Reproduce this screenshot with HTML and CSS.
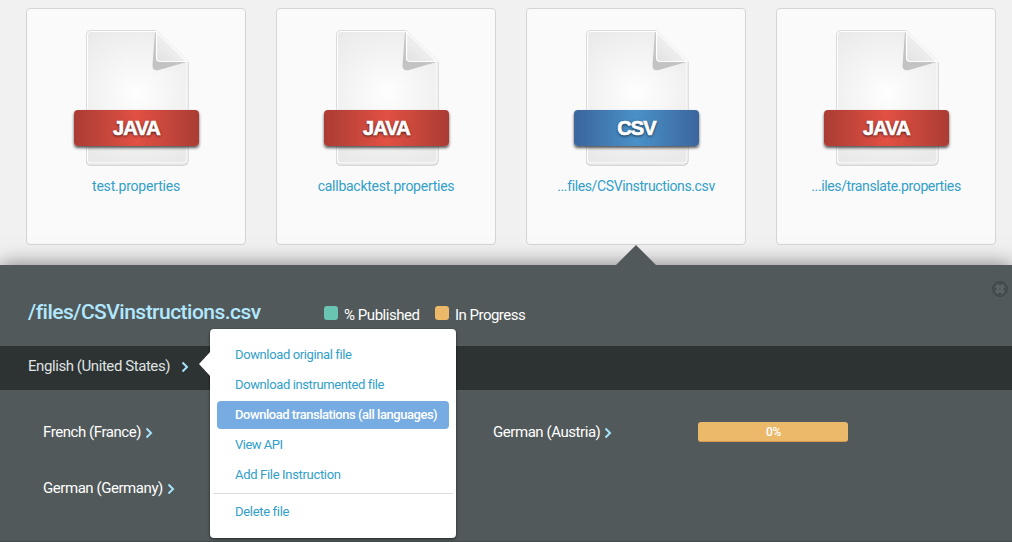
FILE: index.html
```html
<!DOCTYPE html>
<html lang="en">
<head>
<meta charset="utf-8">
<title>Files</title>
<link rel="stylesheet" href="styles.css">
</head>
<body>
<svg class="defs" width="0" height="0" aria-hidden="true">
  <defs>
    <radialGradient id="paper" gradientUnits="userSpaceOnUse" cx="64" cy="64" r="78">
      <stop offset="0" stop-color="#fefefe"/><stop offset="1" stop-color="#e9e9e9"/>
    </radialGradient>
    <linearGradient id="fold" x1="0" y1="1" x2=".6" y2=".3">
      <stop offset="0" stop-color="#e2e2e2"/><stop offset="1" stop-color="#f3f3f3"/>
    </linearGradient>
    <symbol id="page" viewBox="0 0 128 140">
      <path d="M17 1.500H83.500L115 32.500V131.500a4 4 0 0 1-4 4H17a3.500 3.500 0 0 1-3.500-4V5.500a4 4 0 0 1 3.500-4z" fill="none" stroke="#999" stroke-opacity=".45" stroke-width="1" transform="translate(0 .8)"/>
      <path d="M17 1.500H83.500L115 32.500V131a4 4 0 0 1-4 4H17a3.500 3.500 0 0 1-3.500-4V5.500a4 4 0 0 1 3.500-4z" fill="#fff" stroke="#dadada" stroke-width="1"/>
      <path d="M18 3H83L113.500 33V130.500a3 3 0 0 1-3 3H18a3 3 0 0 1-3-3V6a3 3 0 0 1 3-3z" fill="url(#paper)"/>
      <path d="M82 3L79.500 36.500Q79.500 42.500 86 41L113.500 33z" fill="#c3c3c3"/>
      <path d="M83.500 2.500L114 32.500H87.500Q83.500 32.500 83.500 28.500z" fill="url(#fold)" stroke="#fff" stroke-width="1.200"/>
    </symbol>
    <symbol id="chevron" viewBox="0 0 8 12">
      <path d="M1.500 1.500L6 6L1.500 10.500" fill="none" stroke="#a5e3fb" stroke-width="2"/>
    </symbol>
  </defs>
</svg>
<main class="files">
  <a class="card"><div class="icon"><svg class="sheet"><use href="#page"/></svg><span class="ribbon">JAVA</span></div><span class="name n1">test.properties</span></a>
  <a class="card"><div class="icon"><svg class="sheet"><use href="#page"/></svg><span class="ribbon">JAVA</span></div><span class="name n2">callbacktest.properties</span></a>
  <a class="card"><div class="icon"><svg class="sheet"><use href="#page"/></svg><span class="ribbon csv">CSV</span></div><span class="name n3">...files/CSVinstructions.csv</span></a>
  <a class="card"><div class="icon"><svg class="sheet"><use href="#page"/></svg><span class="ribbon">JAVA</span></div><span class="name n4">...iles/translate.properties</span></a>
</main>
<section class="panel">
  <svg class="pointer" viewBox="0 0 40 20"><path d="M0 20L20 0L40 20z" fill="#51595a"/></svg>
  <svg class="close" viewBox="0 0 18 18"><circle cx="9" cy="9" r="7.500" fill="#464e4f" stroke="#404849"/><path d="M5.500 5.500L12.500 12.500M12.500 5.500L5.500 12.500" stroke="#667071" stroke-width="3.200"/><path d="M6 6L12 12M12 6L6 12" stroke="#50595a" stroke-width="1.400"/></svg>
  <header class="head">
    <h1 class="title">/files/CSVinstructions.csv</h1>
    <div class="legend"><i class="swatch green"></i><span class="l1">% Published</span><i class="swatch orange"></i><span class="l2">In Progress</span></div>
  </header>
  <div class="source"><span class="lang">English (United States)</span><svg class="chev"><use href="#chevron"/></svg>
    <nav class="menu">
      <svg class="arrow" viewBox="0 0 13 26"><path d="M13 0L1 13L13 26z" fill="#fff"/></svg>
      <a class="item m1">Download original file</a>
      <a class="item m2">Download instrumented file</a>
      <a class="item active">Download translations (all languages)</a>
      <a class="item m4">View API</a>
      <a class="item m5">Add File Instruction</a>
      <hr class="rule">
      <a class="item m6">Delete file</a>
    </nav>
  </div>
  <div class="targets">
    <div class="target"><span class="t1">French (France)</span><svg class="chev"><use href="#chevron"/></svg></div>
    <div class="target"><span class="t2">German (Austria)</span><svg class="chev"><use href="#chevron"/></svg><span class="bar">0%</span></div>
    <div class="target"><span class="t3">German (Germany)</span><svg class="chev"><use href="#chevron"/></svg></div>
  </div>
</section>
</body>
</html>
```
FILE: styles.css
```css
* { box-sizing: border-box; }
body { margin: 0; height: 542px; overflow: hidden; background: #f1f1f1; font-family: Roboto, "Liberation Sans", sans-serif; display: flex; flex-direction: column; }
.defs { position: absolute; }
.files { display: flex; gap: 30px; padding: 8px 0 0 26px; height: 265px; flex: none; }
.card { width: 220px; height: 237px; flex: none; border: 1px solid #d5d5d5; border-radius: 4px; background: #fafafa; display: flex; flex-direction: column; align-items: center; padding-top: 20px; }
.icon { position: relative; width: 128px; height: 140px; margin-left: 2px; display: grid; flex: none; }
.sheet { width: 128px; height: 140px; grid-area: 1 / 1; }
.ribbon { grid-area: 1 / 1; z-index: 1; width: 125px; height: 36px; margin: 81px 0 0 1px; border-radius: 4px; background: linear-gradient(90deg, #aa3c34, #e25043 50%, #aa3c34); box-shadow: 0 2px 3px rgba(0,0,0,.65); color: #fff; font-family: "Liberation Sans", sans-serif; font-size: 20px; line-height: 36px; font-weight: 700; letter-spacing: -.9px; text-align: center; text-shadow: 0 1px 3px rgba(0,0,0,.8); -webkit-text-stroke: .7px #fff; }
.ribbon.csv { background: linear-gradient(90deg, #3b659d, #4991c8 50%, #3b659d); }
.name { font-size: 14px; line-height: 20px; margin-top: 7px; color: #32a0c9; white-space: nowrap; }
.n1 { letter-spacing: -.2px; }
.n2 { letter-spacing: -.26px; }
.n3 { letter-spacing: -.38px; }
.n4 { letter-spacing: -.38px; }
.panel { position: relative; z-index: 2; flex: 1; background: #51595a; box-shadow: 0 0 20px rgba(0,0,0,.5); border-bottom: 1px solid #454c4d; }
.pointer { position: absolute; left: 616px; top: -20px; width: 40px; height: 20px; }
.close { position: absolute; left: 991px; top: 15px; width: 18px; height: 18px; }
.head { height: 81px; padding: 0 0 0 28px; display: flex; align-items: center; }
.title { margin: 12px 0 0; width: 296px; font-size: 21px; line-height: 28px; font-weight: 500; letter-spacing: -.52px; color: #b1e8ff; white-space: nowrap; }
.legend { display: flex; align-items: center; margin-top: 18px; color: #fff; font-size: 15px; line-height: 20px; letter-spacing: -.45px; white-space: nowrap; }
.l2 { letter-spacing: -.52px; }
.swatch { width: 14px; height: 14px; border-radius: 3px; margin: -4px 6px 0 0; }
.green { background: #69c5b2; }
.orange { background: #ecb96b; }
.l1 { width: 91px; }
.source { position: relative; height: 44px; background: #2d3232; display: flex; align-items: center; padding-left: 28px; color: #dfe2e2; font-size: 15px; line-height: 20px; }
.lang { margin-top: -4px; width: 153px; letter-spacing: -.43px; white-space: nowrap; }
.chev { width: 8px; height: 12px; flex: none; }
.source .chev { margin-top: -2px; }
.menu { position: absolute; z-index: 3; left: 210px; top: -17px; width: 246px; height: 209px; padding: 12px 7px 0; background: #fff; border-radius: 4px; box-shadow: 0 1px 3px rgba(0,0,0,.6); }
.arrow { position: absolute; left: -12px; top: 22px; width: 13px; height: 26px; }
.item { display: block; height: 28px; line-height: 28px; margin-bottom: 2px; padding-left: 18px; font-size: 13px; color: #32a0c9; border-radius: 4px; white-space: nowrap; letter-spacing: -.32px; }
.m1, .m2 { letter-spacing: -.38px; }
.m4 { letter-spacing: -.5px; }
.active { color: #fff; background: #76ace2; font-weight: 500; width: 232px; letter-spacing: -.46px; }
.rule { border: 0; height: 1px; background: #dcdcdc; margin: 4px -4px 4px; }
.targets { display: grid; grid-template-columns: 450px 450px; grid-auto-rows: 56px; padding: 14px 0 0 43px; color: #fff; font-size: 15px; line-height: 20px; }
.target { display: flex; align-items: center; white-space: nowrap; gap: 4px; letter-spacing: -.44px; }
.target .chev { margin-top: 2px; }
.bar { width: 150px; height: 20px; margin-left: 82px; border-radius: 3px; background: #ecb96b; border-bottom: 1px solid #d49a4e; font-size: 12px; font-weight: 500; text-align: center; }
```
